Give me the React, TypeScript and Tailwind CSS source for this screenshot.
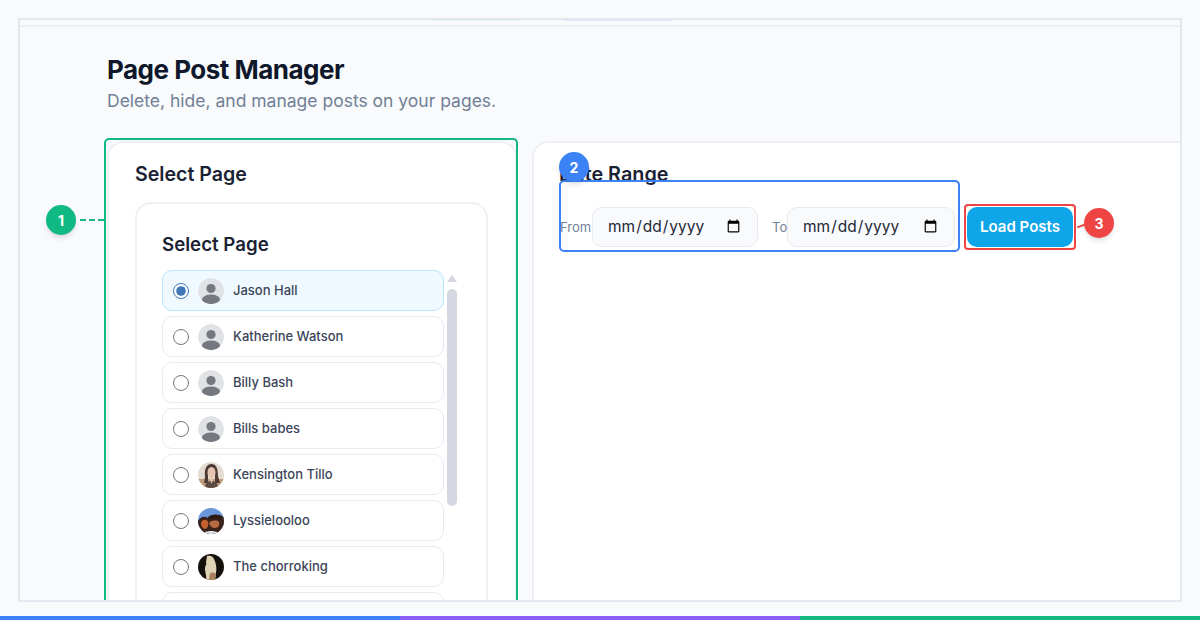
import React from "react";

const Person = () => (
  <svg viewBox="0 0 26 26" className="w-[26px] h-[26px] rounded-full shrink-0">
    <circle cx="13" cy="13" r="13" fill="#e0e2e6" />
    <circle cx="13" cy="10.5" r="4.6" fill="#75797f" />
    <ellipse cx="13" cy="21.5" rx="9" ry="5" fill="#75797f" />
  </svg>
);

const Kensington = () => (
  <svg viewBox="0 0 26 26" className="w-[26px] h-[26px] rounded-full shrink-0 blur-[0.4px]">
    <rect width="26" height="26" fill="#e2dcd2" />
    <rect y="17" width="26" height="9" fill="#c29a7c" />
    <path d="M7 15C6 6 9 2 13.500 2S20 6 20 14l2 7h-5V12h-7v9H6z" fill="#4e3a34" />
    <ellipse cx="13.500" cy="10.500" rx="4" ry="5.600" fill="#e6c4b4" />
    <path d="M7 26c0-5 3-7 6.500-7S20 21 20 26z" fill="#5c4a44" />
    <path d="M11.500 16h4l-2 6z" fill="#e6c4b4" />
  </svg>
);

const Lyssie = () => (
  <svg viewBox="0 0 26 26" className="w-[26px] h-[26px] rounded-full shrink-0 blur-[0.4px]">
    <rect width="26" height="26" fill="#6a97dc" />
    <path d="M0 26V13c3-5 7-5 10-3 3-4 10-5 16-1v17z" fill="#3a2218" />
    <path d="M3 15c1-4 6-4 7-1 1 4-1 7-3 7s-4-3-4-6z" fill="#c4602f" />
    <path d="M11 15c2-3 8-3 10-1 1 3-1 6-4 6-3 0-5-2-6-5z" fill="#b86a44" />
    <path d="M10 9c4-3 10-3 14 0l-2 3c-3-2-8-2-11 0z" fill="#2c1a14" />
    <path d="M6 24.500c4-2 10-2 14 0V26H6z" fill="#dfe5ee" />
  </svg>
);

const Chorro = () => (
  <svg viewBox="0 0 26 26" className="w-[26px] h-[26px] rounded-full shrink-0 blur-[0.4px]">
    <rect width="26" height="26" fill="#14110d" />
    <path d="M9 2c3-1 6 0 7 3 2 4 3 9 2 14l-1 7H8c1-4-1-7-1-11 0-4 2-4 1-7z" fill="#ddd2b4" />
    <path d="M12 19c2-1 6-1 6 2l-1 5h-6z" fill="#a57e5a" />
  </svg>
);

const pages: { name: string; avatar: React.ReactNode }[] = [
  { name: "Jason Hall", avatar: <Person /> },
  { name: "Katherine Watson", avatar: <Person /> },
  { name: "Billy Bash", avatar: <Person /> },
  { name: "Bills babes", avatar: <Person /> },
  { name: "Kensington Tillo", avatar: <Kensington /> },
  { name: "Lyssielooloo", avatar: <Lyssie /> },
  { name: "The chorroking", avatar: <Chorro /> },
  { name: "", avatar: <Chorro /> },
];

const inputCls =
  "h-10 rounded-[10px] border border-[#e8eaf0] bg-[#f8fafc] pl-[14px] pr-[14px] text-[15.5px] text-[#1f2937] font-['Inter',sans-serif] outline-none";

export default function App() {
  return (
    <div className="relative h-[620px] w-[1200px] overflow-hidden bg-[#f8fafc] font-['Inter',sans-serif]">
      <div className="absolute left-[18px] top-[18px] h-[584px] w-[1164px] overflow-hidden border-2 border-[#e2e8f0]">
        <div className="flex h-[7px] border-b-2 border-[#eef0f4]">
          <div className="ml-[412px] h-px w-[90px] bg-[#e3f5ec]" />
          <div className="ml-[41px] h-px w-[109px] bg-[#ebe8fa]" />
        </div>
        <div className="pl-[87px] pt-[27px]">
          <h1 className="text-[26px] leading-8 font-bold tracking-[-0.5px] text-[#0f172a]">Page Post Manager</h1>
          <p className="mt-[3px] text-[17.5px] leading-6 text-[#718096]">
            Delete, hide, and manage posts on your pages.
          </p>
          <div className="mt-[28px] flex w-[1200px] items-start gap-[15px]">
            <div className="h-[500px] w-[410px] shrink-0 rounded-2xl border-2 border-[#eef0f4] bg-white pl-[26px] pt-[19px]">
              <h2 className="text-[19.6px] leading-[24px] font-semibold text-[#1a2233]">Select Page</h2>
              <div className="mt-[16px] h-[440px] w-[353px] rounded-2xl border-2 border-[#eef0f4] pl-[25px] pt-[29px]">
                <h3 className="text-[18.7px] leading-[24px] font-semibold text-[#1a2233]">Select Page</h3>
                <div className="relative mt-[13px] flex flex-col gap-[5px]">
                  {pages.map((p, i) => (
                    <label
                      key={i}
                      className={
                        i === 0
                          ? "flex h-[41px] w-[282px] shrink-0 items-center rounded-[10px] border border-[#bae6fd] bg-[#f0f9ff] pl-[10px]"
                          : "flex h-[41px] w-[282px] shrink-0 items-center rounded-[10px] border border-[#e8eaf0] bg-white pl-[10px]"
                      }
                    >
                      <input type="radio" name="page" defaultChecked={i === 0} className="m-0 h-[16px] w-[16px] shrink-0 accent-[#3f78b5]" />
                      <span className="ml-[9px]">{p.avatar}</span>
                      <span className="ml-[9px] text-[13px] font-medium text-[#3b4559]">{p.name}</span>
                    </label>
                  ))}
                  <div className="absolute left-[285px] top-[5px] h-0 w-0 border-x-[5px] border-b-[7px] border-x-transparent border-b-[#d5d8de]" />
                  <div className="absolute left-[285px] top-[19px] h-[217px] w-[10px] rounded-full bg-[#d5d8e0]" />
                </div>
              </div>
            </div>
            <div className="h-[500px] w-[700px] shrink-0 rounded-2xl border-2 border-[#eef0f4] bg-white pl-[25px] pt-[19px]">
              <h2 className="text-[19.8px] leading-[24px] font-semibold text-[#1a2233]">Date Range</h2>
              <div className="mt-[21px] flex items-center">
                <span className="w-[33px] pl-[1px] pt-[2px] text-[13px] text-[#718096]">From</span>
                <input type="date" className={`${inputCls} w-[166px]`} />
                <span className="ml-[14px] w-[15px] pt-[2px] text-[13px] text-[#718096]">To</span>
                <input type="date" className={`${inputCls} w-[168px]`} />
                <button className="ml-[12px] h-10 w-[106px] rounded-[10px] bg-[#0ea5e9] text-[15px] font-semibold text-white">
                  Load Posts
                </button>
              </div>
            </div>
          </div>
        </div>
      </div>

      {/* Annotation overlays */}
      <div className="absolute left-[104px] top-[138px] h-[462px] w-[414px] rounded-t-[5px] border-2 border-b-0 border-[#10b981]" />
      <div className="absolute left-[559px] top-[180px] h-[72px] w-[401px] rounded-[5px] border-2 border-[#3b82f6]" />
      <div className="absolute left-[964px] top-[204px] h-[46px] w-[112px] rounded-[4px] border-2 border-[#ef4444]" />
      <div className="absolute left-[80px] top-[219px] w-[24px] border-t-2 border-dashed border-[#10b981]" />
      <div className="absolute left-[1077px] top-[225px] w-[8px] -rotate-20 border-t-2 border-[#ef4444]" />
      <div className="absolute left-[46px] top-[205px] flex h-[30px] w-[30px] items-center justify-center rounded-full bg-[#10b981] text-[14px] font-bold text-white shadow-md">1</div>
      <div className="absolute left-[559px] top-[152px] flex h-[30px] w-[30px] items-center justify-center rounded-full bg-[#3b82f6] text-[14px] font-bold text-white shadow-md">2</div>
      <div className="absolute left-[1084px] top-[208px] flex h-[30px] w-[30px] items-center justify-center rounded-full bg-[#ef4444] text-[14px] font-bold text-white shadow-md">3</div>

      <div className="absolute bottom-0 left-0 flex h-1 w-full">
        <div className="flex-1 bg-[#3b82f6]" />
        <div className="flex-1 bg-[#8b5cf6]" />
        <div className="flex-1 bg-[#10b981]" />
      </div>
    </div>
  );
}
